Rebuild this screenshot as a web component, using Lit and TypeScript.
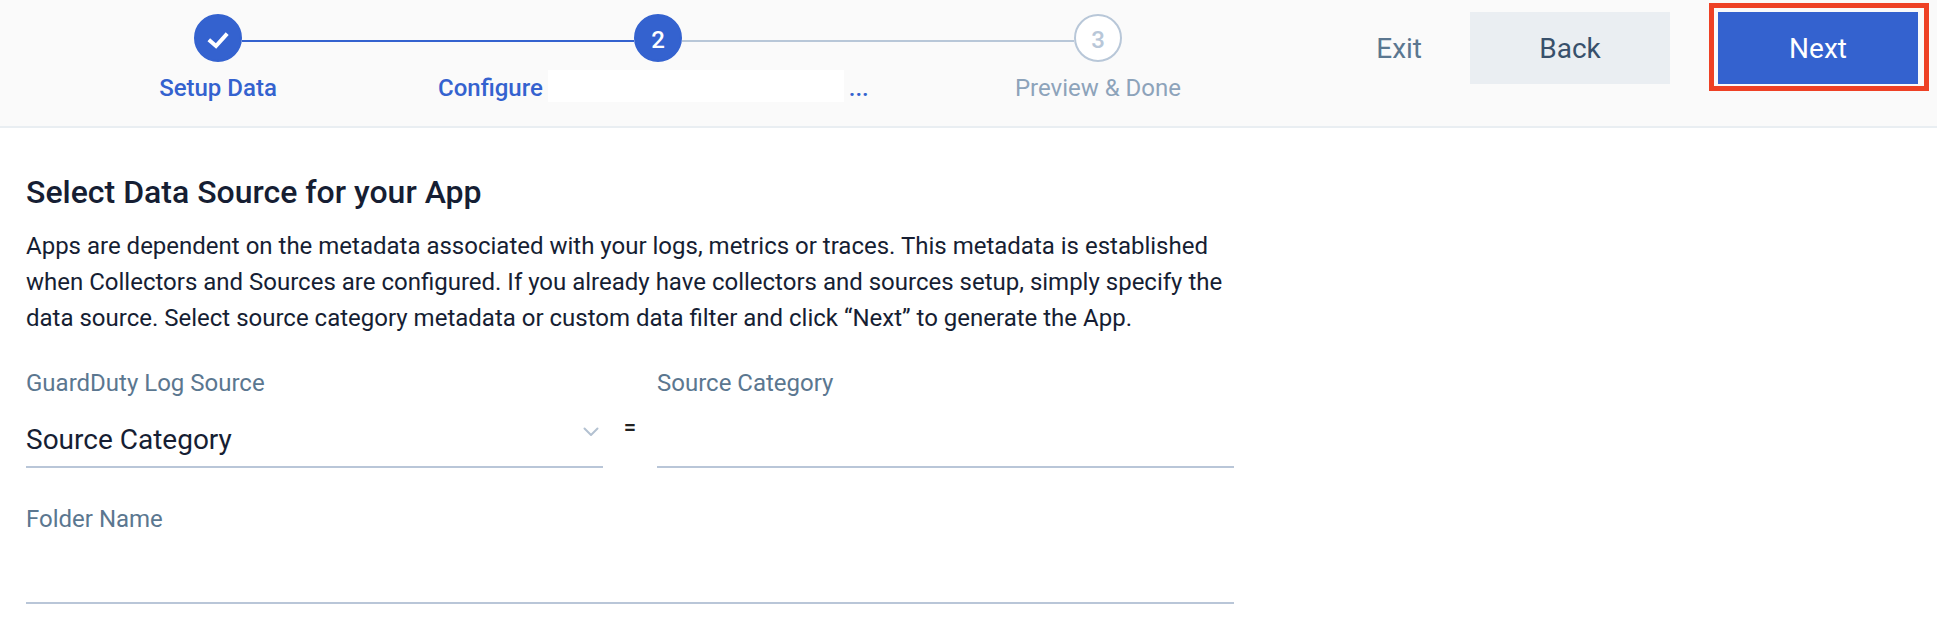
import { LitElement, html, css, nothing } from "lit";
import { customElement, property, state } from "lit/decorators.js";
import { classMap } from "lit/directives/class-map.js";

type StepState = "done" | "current" | "upcoming";

interface Step {
  label: string;
  state: StepState;
  masked?: boolean;
}

@customElement("wizard-steps")
export class WizardSteps extends LitElement {
  @property({ attribute: false }) steps: Step[] = [];

  static styles = css`
    :host {
      display: block;
    }
    .steps {
      display: grid;
      grid-template-columns: 436fr 444fr 436fr;
      margin: 0;
      padding: 0;
      list-style: none;
    }
    .step {
      display: flex;
      flex-direction: column;
      gap: 8px;
      min-width: 0;
      color: #3462cf;
      font-weight: 500;
    }
    .track {
      display: flex;
    }
    .line {
      flex: 1;
      height: 2px;
      margin-top: 26px;
    }
    .line.blue {
      background: #3462cf;
    }
    .line.gray {
      background: #b8c7d8;
    }
    .circle {
      box-sizing: border-box;
      display: flex;
      align-items: center;
      justify-content: center;
      width: 48px;
      height: 48px;
      padding-top: 4px;
      border: 2px solid #3462cf;
      border-radius: 50%;
      background: #3462cf;
      color: #fff;
      line-height: 28px;
    }
    .label {
      display: flex;
      justify-content: center;
      gap: 5px;
      padding: 0 2px;
      line-height: 36px;
      white-space: nowrap;
    }
    .masked {
      justify-content: flex-start;
    }
    .mask {
      flex: 0 1 296px;
      height: 32px;
      background: #fff;
    }
    .upcoming {
      color: #8da3ba;
      font-weight: 400;
    }
    .upcoming .circle {
      border-color: #b8c7d8;
      background: #fff;
      color: #b8c7d8;
      font-weight: 500;
    }
  `;

  private line(from: number) {
    const a = this.steps[from];
    const b = this.steps[from + 1];
    const visible = !!a && !!b;
    const blue = visible && a.state === "done";
    return html`<span class=${classMap({ line: true, blue, gray: visible && !blue })}></span>`;
  }

  render() {
    return html`
      <ol class="steps">
        ${this.steps.map(
          (step, i) => html`
            <li
              class=${classMap({ step: true, [step.state]: true })}
              aria-current=${step.state === "current" ? "step" : nothing}
            >
              <div class="track">
                ${this.line(i - 1)}
                <span class="circle">
                  ${step.state === "done"
                    ? html`<svg width="22" height="18" viewBox="0 0 22 18" aria-hidden="true">
                        <path
                          d="M1.8 8.8 L9 15 L20.2 2.6"
                          fill="none"
                          stroke="#fff"
                          stroke-width="4"
                        />
                      </svg>`
                    : i + 1}
                </span>
                ${this.line(i)}
              </div>
              <div class=${classMap({ label: true, masked: !!step.masked })}>
                <span>${step.label}</span>
                ${step.masked ? html`<span class="mask"></span><span>...</span>` : nothing}
              </div>
            </li>
          `
        )}
      </ol>
    `;
  }
}

@customElement("app-root")
export class AppRoot extends LitElement {
  @state() private steps: Step[] = [
    { label: "Setup Data", state: "done" },
    { label: "Configure", state: "current", masked: true },
    { label: "Preview & Done", state: "upcoming" },
  ];

  static styles = css`
    :host {
      display: block;
      background: #fff;
      color: #161e33;
      font-family: Roboto, "Liberation Sans", sans-serif;
      font-size: 24px;
    }
    .header {
      display: flex;
      align-items: flex-start;
      justify-content: space-between;
      padding: 12px 19px 20px 0;
      border-bottom: 2px solid #e9eef2;
      background: #fafafa;
    }
    .progress {
      flex: 0 1 1316px;
      padding-top: 2px;
    }
    .actions {
      display: flex;
      gap: 48px;
    }
    .button {
      height: 72px;
      padding: 0;
      border: 0;
      background: none;
      color: #5b7790;
      font: inherit;
      font-size: 28px;
      cursor: pointer;
    }
    .back,
    .next {
      width: 200px;
    }
    .back {
      background: #eaeef2;
      color: #38506b;
    }
    .next {
      background: #3462cf;
      color: #fff;
    }
    .highlighted {
      position: relative;
      display: flex;
    }
    .highlighted::after {
      content: "";
      position: absolute;
      inset: -9px -11px -7px -9px;
      border: 5px solid #ee4125;
      pointer-events: none;
    }
    .content {
      box-sizing: border-box;
      max-width: 1260px;
      padding: 44px 26px 14px;
    }
    .title {
      margin: 0 0 16px;
      font-size: 32px;
      font-weight: 500;
      line-height: 40px;
    }
    .intro {
      margin: 0 0 32px;
      line-height: 36px;
    }
    .form {
      display: flex;
      flex-direction: column;
      gap: 36px;
    }
    .row {
      display: grid;
      grid-template-columns: 1fr 54px 1fr;
    }
    .field {
      display: flex;
      flex-direction: column;
      min-width: 0;
    }
    .label {
      color: #5b7790;
      line-height: 30px;
    }
    .control {
      box-sizing: border-box;
      display: block;
      width: 100%;
      height: 70px;
      margin: 0;
      padding: 24px 0 8px;
      border: 0;
      border-bottom: 2px solid #b9c6d8;
      border-radius: 0;
      outline: 0;
      background: transparent;
      color: inherit;
      font: inherit;
      font-size: 28px;
      line-height: 36px;
      appearance: none;
    }
    .picker {
      position: relative;
    }
    .chevron {
      position: absolute;
      top: 28px;
      right: 4px;
      pointer-events: none;
    }
    .equals {
      padding-top: 28px;
      color: #222;
      font-size: 22px;
      font-weight: 500;
      line-height: 64px;
      text-align: center;
    }
  `;

  render() {
    return html`
      <header class="header">
        <wizard-steps class="progress" .steps=${this.steps}></wizard-steps>
        <div class="actions">
          <button class="button" type="button">Exit</button>
          <button class="button back" type="button">Back</button>
          <span class="highlighted">
            <button class="button next" type="submit" form="source-form">Next</button>
          </span>
        </div>
      </header>
      <main class="content">
        <h1 class="title">Select Data Source for your App</h1>
        <p class="intro">
          Apps are dependent on the metadata associated with your logs, metrics or traces. This
          metadata is established when Collectors and Sources are configured. If you already have
          collectors and sources setup, simply specify the data source. Select source category
          metadata or custom data filter and click “Next” to generate the App.
        </p>
        <form class="form" id="source-form" @submit=${(e: Event) => e.preventDefault()}>
          <div class="row">
            <div class="field">
              <label class="label" for="log-source">GuardDuty Log Source</label>
              <div class="picker">
                <select class="control" id="log-source">
                  <option>Source Category</option>
                </select>
                <svg class="chevron" width="16" height="12" viewBox="0 0 16 12" aria-hidden="true">
                  <path
                    d="M1.5 2.5 L8 9 L14.5 2.5"
                    fill="none"
                    stroke="#b3c1d1"
                    stroke-width="2"
                    stroke-linecap="round"
                    stroke-linejoin="round"
                  />
                </svg>
              </div>
            </div>
            <span class="equals">=</span>
            <div class="field">
              <label class="label" for="category">Source Category</label>
              <input class="control" id="category" type="text" />
            </div>
          </div>
          <div class="field">
            <label class="label" for="folder">Folder Name</label>
            <input class="control" id="folder" type="text" />
          </div>
        </form>
      </main>
    `;
  }
}
